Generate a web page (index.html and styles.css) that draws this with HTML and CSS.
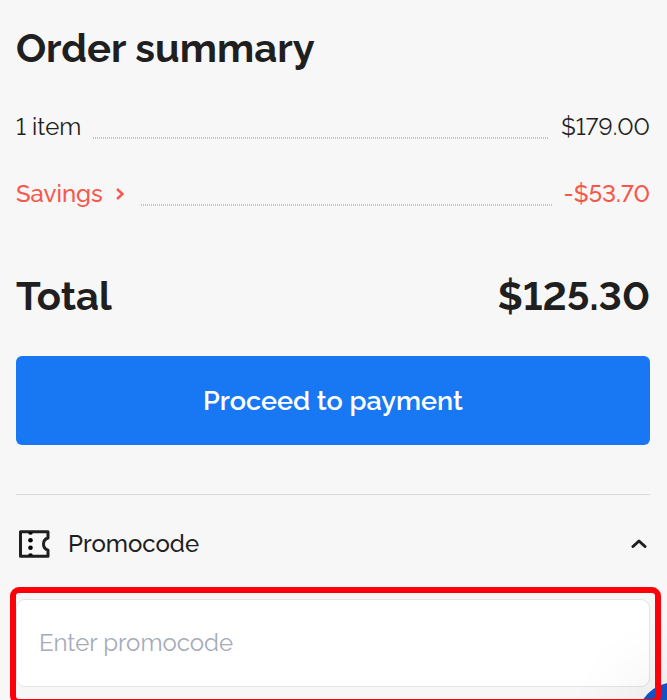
FILE: index.html
```html
<!DOCTYPE html>
<html lang="en">
<head>
<meta charset="utf-8">
<meta name="viewport" content="width=device-width, initial-scale=1">
<title>Order summary</title>
<link rel="stylesheet" href="styles.css">
</head>
<body>
<main class="summary">
  <h1 class="heading">Order summary</h1>
  <div class="row">
    <span>1 item</span>
    <span class="leader"></span>
    <span>$179.00</span>
  </div>
  <div class="row savings">
    <a class="savings-link" href="#savings">Savings
      <svg class="chevron" viewBox="0 0 10 14" aria-hidden="true"><path d="M2 2 7.500 7 2 12"/></svg>
    </a>
    <span class="leader"></span>
    <span>-$53.70</span>
  </div>
  <div class="total">
    <span>Total</span>
    <span>$125.30</span>
  </div>
  <button class="pay" type="button">Proceed to payment</button>
  <section class="promo">
    <button class="promo-toggle" type="button" aria-expanded="true">
      <svg class="ticket" viewBox="0 0 32 28" aria-hidden="true">
        <path class="outline" d="M1.500 1.800H29V8C25.500 9 24.500 11 24.500 14S25.500 19 29 20.200V26.200H1.500Z"/>
        <circle cx="11.500" cy="10.300" r="2.300"/>
        <circle cx="11.500" cy="17.700" r="2.300"/>
        <path d="M9.200 2.500h4.600a2.300 2.300 0 0 1-4.600 0ZM9.200 25.500h4.600a2.300 2.300 0 0 0-4.600 0Z"/>
      </svg>
      <span class="promo-title">Promocode</span>
      <svg class="caret" viewBox="0 0 16 10" aria-hidden="true"><path d="M2 7.500l6-5.500 6 5.500"/></svg>
    </button>
    <div class="field">
      <input class="code" type="text" placeholder="Enter promocode" aria-label="Promocode">
    </div>
  </section>
</main>
<button class="chat" type="button" aria-label="Chat"></button>
</body>
</html>
```
FILE: styles.css
```css
* {
  box-sizing: border-box;
}

body {
  margin: 0;
  min-height: 100vh;
  overflow: hidden;
  background: #f7f7f7;
  color: #1f1f1f;
  font-family: Raleway, Lato, sans-serif;
  font-size: 24px;
  font-variant-numeric: lining-nums;
  line-height: 32px;
}

button,
input {
  font: inherit;
  color: inherit;
}

.summary {
  padding: 24px 17px 0 16px;
}

.heading {
  margin: 0 0 39px;
  font-size: 40px;
  line-height: 48px;
  font-weight: 700;
}

.row {
  display: flex;
  gap: 12px;
  margin-bottom: 35px;
}

.leader {
  flex: 1;
  height: 2px;
  margin-top: 26px;
  background: repeating-linear-gradient(90deg, #c4c4c4 0 1px, transparent 1px 2px);
}

.savings {
  color: #f9574b;
  font-weight: 500;
}

.savings-link {
  display: flex;
  align-items: center;
  gap: 12px;
  margin-right: 4px;
  color: inherit;
  text-decoration: none;
}

.chevron {
  width: 10px;
  height: 14px;
  fill: none;
  stroke: currentColor;
  stroke-width: 2.4;
}

.total {
  display: flex;
  justify-content: space-between;
  margin: 62px 0 36px;
  font-size: 40px;
  line-height: 48px;
  font-weight: 700;
}

.pay {
  display: block;
  width: 100%;
  padding: 29px 16px 28px;
  border: 0;
  border-radius: 6px;
  background: #1877f2;
  color: #fff;
  font-size: 27px;
  font-weight: 600;
}

.promo {
  margin-top: 49px;
  border-top: 1px solid #dadada;
}

.promo-toggle {
  display: flex;
  align-items: center;
  width: 100%;
  padding: 33px 3px;
  border: 0;
  background: none;
  font-weight: 500;
  text-align: left;
}

.ticket {
  width: 32px;
  height: 28px;
  margin-right: 17px;
}

.outline {
  fill: none;
  stroke: #1f1f1f;
  stroke-width: 3;
  stroke-linejoin: round;
}

.promo-title {
  flex: 1;
}

.caret {
  width: 16px;
  height: 10px;
  fill: none;
  stroke: #1f1f1f;
  stroke-width: 3;
  stroke-linecap: round;
  stroke-linejoin: round;
}

.field {
  position: relative;
  margin-top: 6px;
}

.field::after {
  content: "";
  position: absolute;
  inset: -12px -11px -18px -6px;
  z-index: 2;
  border: 6px solid #ff0008;
  border-radius: 9px;
  pointer-events: none;
}

.code {
  display: block;
  width: 100%;
  padding: 27px 22px;
  border: 1px solid #e3e4ea;
  border-radius: 9px;
  background: #fff;
}

.code::placeholder {
  color: #a5abb7;
  opacity: 1;
}

.chat {
  position: fixed;
  right: -49px;
  bottom: -62px;
  z-index: 1;
  width: 80px;
  height: 80px;
  border: 0;
  border-radius: 50%;
  background: #1053c5;
  box-shadow: 0 0 80px rgba(0, 0, 0, 0.12);
}
```
